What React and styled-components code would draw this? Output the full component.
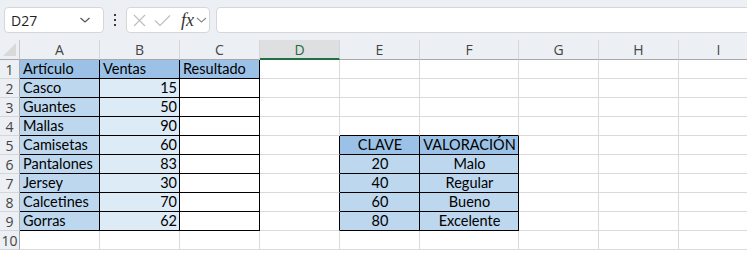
import React from 'react';
import styled, { createGlobalStyle } from 'styled-components';

const GlobalStyle = createGlobalStyle`
  body {
    margin: 0;
    background: #ffffff;
    overflow: hidden;
  }
`;

const BLUE_HEAD = '#9bc2e6';
const BLUE_MID = '#bdd7ee';
const BLUE_LIGHT = '#ddebf7';
const GRID = '#dadada';

const columns = [
  { key: 'A', w: 80 },
  { key: 'B', w: 80 },
  { key: 'C', w: 80 },
  { key: 'D', w: 80, selected: true },
  { key: 'E', w: 80 },
  { key: 'F', w: 99 },
  { key: 'G', w: 80 },
  { key: 'H', w: 80 },
  { key: 'I', w: 80 },
];

const articles = [
  ['Casco', 15],
  ['Guantes', 50],
  ['Mallas', 90],
  ['Camisetas', 60],
  ['Pantalones', 83],
  ['Jersey', 30],
  ['Calcetines', 70],
  ['Gorras', 62],
];

const ratings = [
  ['CLAVE', 'VALORACIÓN'],
  ['20', 'Malo'],
  ['40', 'Regular'],
  ['60', 'Bueno'],
  ['80', 'Excelente'],
];

function buildRows() {
  const rows = [];
  for (let r = 1; r <= 10; r++) {
    const cells = columns.map(() => ({ text: '', align: 'left' }));
    if (r === 1) {
      cells[0] = { text: 'Artículo', bg: BLUE_HEAD };
      cells[1] = { text: 'Ventas', bg: BLUE_HEAD };
      cells[2] = { text: 'Resultado', bg: BLUE_HEAD };
    } else if (r <= 9) {
      const [name, qty] = articles[r - 2];
      cells[0] = { text: name, bg: BLUE_MID };
      cells[1] = { text: qty, bg: BLUE_LIGHT, align: 'right' };
      cells[2] = { text: '' };
    }
    if (r <= 9) {
      for (let c = 0; c < 3; c++) {
        cells[c].br = true;
        cells[c].bb = true;
      }
    }
    if (r === 4) {
      cells[4].bb = true;
      cells[5].bb = true;
    }
    if (r >= 5 && r <= 9) {
      const [k, v] = ratings[r - 5];
      const bg = r === 5 ? BLUE_HEAD : BLUE_MID;
      cells[3].br = true;
      cells[4] = { text: k, bg, align: 'center', br: true, bb: true };
      cells[5] = { text: v, bg, align: 'center', br: true, bb: true };
    }
    rows.push(cells);
  }
  return rows;
}

export default function App() {
  const rows = buildRows();
  return (
    <>
      <GlobalStyle />
      <Page>
        <Toolbar>
          <NameBox>
            <NameText>D27</NameText>
            <Chevron width="12" height="8" viewBox="0 0 12 8">
              <path d="M1.5 2 L6 6 L10.5 2" fill="none" stroke="#555" strokeWidth="1.2" />
            </Chevron>
          </NameBox>
          <Dots>
            <span />
            <span />
            <span />
          </Dots>
          <FormulaButtons>
            <svg width="13" height="13" viewBox="0 0 13 13">
              <path d="M1 1 L12 12 M12 1 L1 12" stroke="#bdbdbd" strokeWidth="1.1" />
            </svg>
            <svg width="17" height="13" viewBox="0 0 17 13">
              <path d="M1 6.5 L6 11.5 L16 1.5" fill="none" stroke="#bdbdbd" strokeWidth="1.1" />
            </svg>
            <Fx>fx</Fx>
            <svg width="11" height="8" viewBox="0 0 11 8">
              <path d="M1 2 L5.5 6 L10 2" fill="none" stroke="#8a8a8a" strokeWidth="1.1" />
            </svg>
          </FormulaButtons>
          <FormulaInput />
        </Toolbar>
        <Sheet $cols={columns.map((c) => `${c.w}px`).join(' ')}>
          <Corner>
            <svg width="13" height="13" viewBox="0 0 13 13">
              <polygon points="13,0 13,13 0,13" fill="#d9d9d9" />
            </svg>
          </Corner>
          {columns.map((c) => (
            <ColHead key={c.key} $selected={c.selected}>
              {c.key}
            </ColHead>
          ))}
          {rows.map((cells, i) => (
            <React.Fragment key={i}>
              <RowHead>{i + 1}</RowHead>
              {cells.map((cell, j) => (
                <Cell
                  key={j}
                  $bg={cell.bg}
                  $align={cell.align}
                  $br={cell.br}
                  $bb={cell.bb}
                >
                  {cell.text}
                </Cell>
              ))}
            </React.Fragment>
          ))}
        </Sheet>
      </Page>
    </>
  );
}

const Page = styled.div`
  width: 747px;
  height: 253px;
  overflow: hidden;
  background: #ffffff;
`;

const Toolbar = styled.div`
  display: flex;
  align-items: center;
  height: 40px;
  padding-left: 4px;
  background: #eceff3;
  box-sizing: border-box;
`;

const NameBox = styled.div`
  display: flex;
  align-items: center;
  justify-content: space-between;
  width: 100px;
  height: 26px;
  box-sizing: border-box;
  padding: 0 12px 0 6px;
  background: #ffffff;
  border: 1px solid #d6d6d6;
  border-radius: 4px;
  flex-shrink: 0;
`;

const NameText = styled.span`
  font-family: 'Open Sans', 'Noto Sans', sans-serif;
  font-size: 14px;
  color: #1f1f1f;
`;

const Chevron = styled.svg`
  display: block;
`;

const Dots = styled.div`
  width: 22px;
  display: flex;
  flex-direction: column;
  align-items: center;
  gap: 3px;
  flex-shrink: 0;

  span {
    width: 2px;
    height: 2px;
    background: #3a3a3a;
  }
`;

const FormulaButtons = styled.div`
  display: flex;
  align-items: center;
  gap: 8px;
  width: 84px;
  height: 26px;
  box-sizing: border-box;
  padding: 0 0 0 6px;
  background: #ffffff;
  border: 1px solid #d6d6d6;
  border-radius: 4px;
  flex-shrink: 0;

  svg {
    display: block;
  }
`;

const Fx = styled.span`
  font-family: 'Liberation Serif', 'DejaVu Serif', serif;
  font-style: italic;
  font-size: 18px;
  color: #333;
  margin-left: 2px;
  margin-right: -6px;
  line-height: 1;
`;

const FormulaInput = styled.div`
  flex: 0 0 560px;
  height: 26px;
  margin-left: 6px;
  box-sizing: border-box;
  background: #ffffff;
  border: 1px solid #d6d6d6;
  border-radius: 4px;
`;

const Sheet = styled.div`
  display: grid;
  grid-template-columns: 20px ${(p) => p.$cols};
  grid-template-rows: 20px repeat(10, 19px);
  width: max-content;
`;

const Corner = styled.div`
  display: flex;
  align-items: flex-end;
  justify-content: flex-end;
  padding: 0 3px 3px 0;
  box-sizing: border-box;
  background: #eceff3;
  border-right: 1px solid #c8c8c8;
  border-bottom: 1px solid #a8a8a8;
`;

const ColHead = styled.div`
  display: flex;
  align-items: center;
  justify-content: center;
  box-sizing: border-box;
  font-family: 'Open Sans', 'Noto Sans', sans-serif;
  font-size: 14px;
  color: ${(p) => (p.$selected ? '#1b6b3e' : '#444')};
  background: ${(p) => (p.$selected ? '#dedfe0' : '#eceff3')};
  border-right: 1px solid #d4d6d9;
  border-bottom: ${(p) => (p.$selected ? '2px solid #1e7145' : '1px solid #a8a8a8')};
  padding-top: ${(p) => (p.$selected ? '1px' : '0')};
`;

const RowHead = styled.div`
  display: flex;
  align-items: center;
  justify-content: center;
  box-sizing: border-box;
  font-family: 'Open Sans', 'Noto Sans', sans-serif;
  font-size: 14px;
  color: #444;
  background: #eceff3;
  border-right: 1px solid #a8a8a8;
  border-bottom: 1px solid #d4d6d9;
`;

const Cell = styled.div`
  box-sizing: border-box;
  padding: 0 2px 0 3px;
  font-family: Lato, 'Open Sans', sans-serif;
  font-size: 14.5px;
  line-height: 18px;
  color: #000;
  white-space: nowrap;
  overflow: visible;
  text-align: ${(p) => p.$align || 'left'};
  background: ${(p) => p.$bg || '#ffffff'};
  border-right: 1px solid ${(p) => (p.$br ? '#000' : GRID)};
  border-bottom: 1px solid ${(p) => (p.$bb ? '#000' : GRID)};
`;
